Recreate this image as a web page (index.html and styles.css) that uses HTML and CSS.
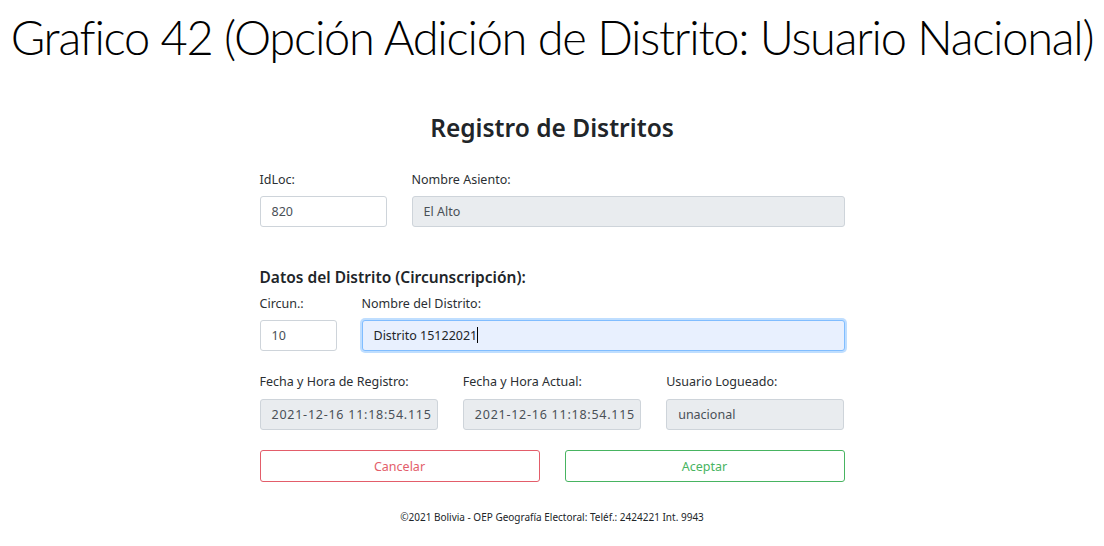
FILE: index.html
```html
<!DOCTYPE html>
<html lang="es">
<head>
<meta charset="utf-8">
<title>Registro de Distritos</title>
<link rel="stylesheet" href="styles.css">
</head>
<body>
<header class="doc-title">Grafico 42 (Opción Adición de Distrito: Usuario Nacional)</header>
<main class="form-card">
  <h2 class="form-title">Registro de Distritos</h2>
  <div class="row">
    <div class="field w-id">
      <label class="lbl">IdLoc:</label>
      <div class="ctl">820</div>
    </div>
    <div class="field grow">
      <label class="lbl">Nombre Asiento:</label>
      <div class="ctl disabled">El Alto</div>
    </div>
  </div>
  <h3 class="section">Datos del Distrito (Circunscripción):</h3>
  <div class="row">
    <div class="field w-circ">
      <label class="lbl">Circun.:</label>
      <div class="ctl">10</div>
    </div>
    <div class="field grow">
      <label class="lbl">Nombre del Distrito:</label>
      <div class="ctl focused">Distrito 15122021<span class="caret"></span></div>
    </div>
  </div>
  <div class="row three">
    <div class="field grow">
      <label class="lbl">Fecha y Hora de Registro:</label>
      <div class="ctl disabled date">2021-12-16 11:18:54.115</div>
    </div>
    <div class="field grow">
      <label class="lbl">Fecha y Hora Actual:</label>
      <div class="ctl disabled date">2021-12-16 11:18:54.115</div>
    </div>
    <div class="field grow">
      <label class="lbl">Usuario Logueado:</label>
      <div class="ctl disabled">unacional</div>
    </div>
  </div>
  <div class="actions">
    <button class="btn btn-cancel">Cancelar</button>
    <button class="btn btn-ok">Aceptar</button>
  </div>
  <footer class="foot">©2021 Bolivia - OEP Geografía Electoral: Teléf.: 2424221 Int. 9943</footer>
</main>
</body>
</html>
```
FILE: styles.css
```css
html, body {
  margin: 0;
  padding: 0;
  background: #ffffff;
}
body {
  font-family: "Noto Sans", "Open Sans", sans-serif;
  color: #212529;
}
.doc-title {
  font-family: Lato, "Liberation Sans", sans-serif;
  font-weight: 300;
  font-size: 47px;
  letter-spacing: -1.25px;
  line-height: 56px;
  padding-top: 9px;
  height: 71px;
  text-align: center;
  color: #000;
  white-space: nowrap;
}
.form-card {
  width: 585px;
  margin: 0 auto;
  padding-top: 33px;
}
.form-title {
  margin: 0;
  font-size: 24.5px;
  font-weight: 600;
  line-height: 30px;
  text-align: center;
  color: #212529;
}
.row {
  display: flex;
  gap: 25px;
  margin-top: 27px;
}
.row.three {
  margin-top: 21px;
}
.row.three .lbl {
  margin-bottom: 7px;
}
.section + .row {
  margin-top: 6px;
}
.field {
  display: flex;
  flex-direction: column;
  min-width: 0;
}
.w-id { width: 127px; }
.w-circ { width: 77px; }
.grow { flex: 1 1 0; }
.lbl {
  font-size: 12.5px;
  line-height: 20px;
  margin-bottom: 6px;
  color: #2b2f33;
}
.ctl {
  box-sizing: border-box;
  height: 31px;
  border: 1px solid #ced4da;
  border-radius: 3px;
  padding: 0 4px 0 11px;
  font-size: 12.5px;
  line-height: 29px;
  color: #495057;
  background: #fff;
  white-space: nowrap;
  overflow: hidden;
}
.ctl.date {
  letter-spacing: 0.75px;
}
.ctl.disabled {
  background: #e9ecef;
}
.ctl.focused {
  background: #e8f0fe;
  border-color: #80bdff;
  box-shadow: 0 0 0 2px rgba(0, 123, 255, 0.25);
  color: #212529;
  overflow: visible;
}
.caret {
  display: inline-block;
  width: 1px;
  height: 16px;
  background: #000;
  vertical-align: -3px;
}
.section {
  margin: 39px 0 0;
  font-size: 15.5px;
  font-weight: 600;
  line-height: 22px;
}
.actions {
  display: flex;
  gap: 25px;
  margin-top: 20px;
}
.btn {
  flex: 1 1 0;
  height: 32px;
  box-sizing: border-box;
  background: #fff;
  border-radius: 3px;
  font-family: inherit;
  font-size: 12.5px;
  padding: 0;
  cursor: pointer;
}
.btn-cancel {
  border: 1px solid #e35d6a;
  color: #e35d6a;
}
.btn-ok {
  border: 1px solid #48b461;
  color: #48b461;
}
.foot {
  margin-top: 27px;
  text-align: center;
  font-size: 10px;
  line-height: 16px;
  color: #212529;
}
```
